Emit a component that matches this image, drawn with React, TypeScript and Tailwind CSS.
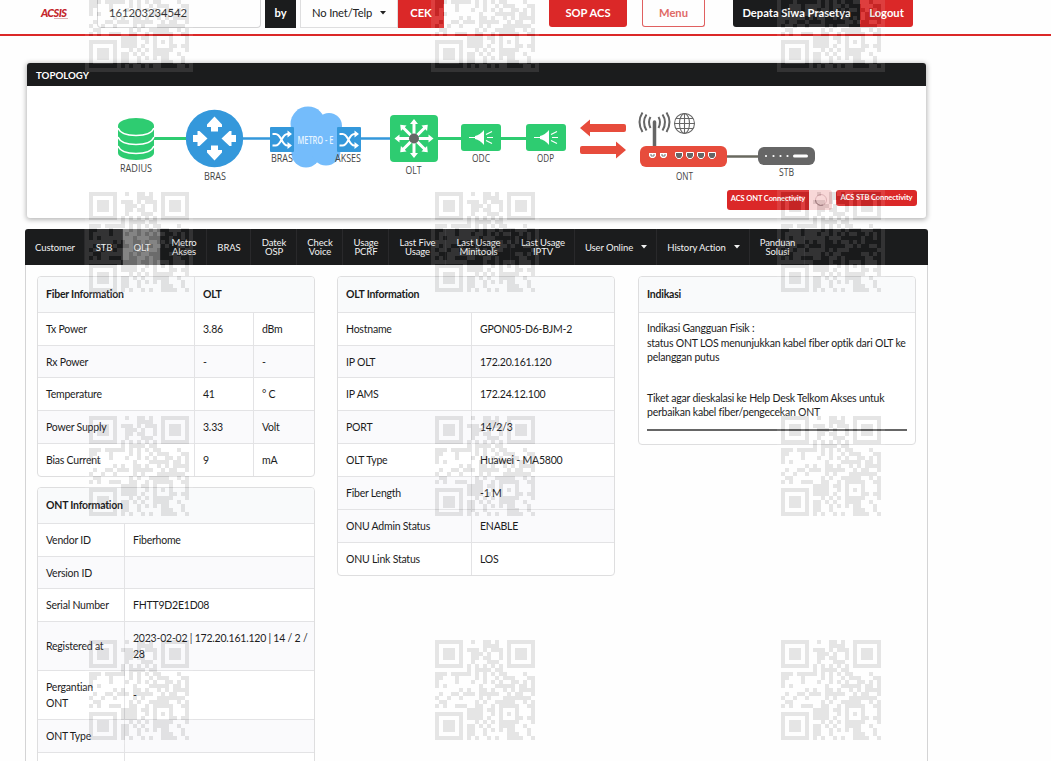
import type { ReactNode } from "react";
import { clsx } from "clsx";

const QR_ROWS = [
    "#######..#..##.#..#######",
    "#.....#.....####..#.....#",
    "#.###.#.###.#.###.#.###.#",
    "#.###.#..###.#..#.#.###.#",
    "#.###.#..##.##..#.#.###.#",
    "#.....#..#...###..#.....#",
    "#######.#.#.#.#.#.#######",
    "........#.####.##........",
    "###.#####.#.#.#.##....#..",
    "##...#....#.#..#.###...##",
    "#....#...#..#.#.#..##.#.#",
    "#.#........#...#####.##.#",
    "......#.#..##.#..#.#.####",
    ".#..##.###.#####..#.##..#",
    "#..#..#....#.#...#######.",
    ".##.......#.#..#####..#.#",
    "#.#..###..##..#.#####..##",
    "........####.##.#...#...#",
    "#######.####..#.#.#.#...#",
    "#.....#.####.#..#...##.##",
    "#.###.#...#.#.#.#####...#",
    "#.###.#.##.#.#..####..#..",
    "#.###.#.##..#.#.#.##...#.",
    "#.....#.##..#.....###..#.",
    "#######.#.#..#.#..####..#",
];

const QR_PATH = QR_ROWS.map((row, y) =>
    row.split("").map((cell, x) => (cell === "#" ? `M${x + 1} ${y + 1}h1v1h-1z` : "")).join("")
).join("");

type Row = { cells: string[]; h: string; striped?: boolean };

const fiberRows: Row[] = [
    { cells: ["Tx Power", "3.86", "dBm"], h: "h-[33px]" },
    { cells: ["Rx Power", "-", "-"], h: "h-[32px]", striped: true },
    { cells: ["Temperature", "41", "° C"], h: "h-[33px]" },
    { cells: ["Power Supply", "3.33", "Volt"], h: "h-[33px]", striped: true },
    { cells: ["Bias Current", "9", "mA"], h: "h-[33px]" },
];

const ontRows: Row[] = [
    { cells: ["Vendor ID", "Fiberhome"], h: "h-[33px]" },
    { cells: ["Version ID", ""], h: "h-[32px]", striped: true },
    { cells: ["Serial Number", "FHTT9D2E1D08"], h: "h-[33px]" },
    { cells: ["Registered at", "2023-02-02 | 172.20.161.120 | 14 / 2 / 28"], h: "h-[49px]", striped: true },
    { cells: ["Pergantian ONT", "-"], h: "h-[49px]" },
    { cells: ["ONT Type", ""], h: "h-[33px]", striped: true },
    { cells: ["", ""], h: "h-[33px]" },
];

const oltRows: Row[] = [
    { cells: ["Hostname", "GPON05-D6-BJM-2"], h: "h-[33px]" },
    { cells: ["IP OLT", "172.20.161.120"], h: "h-[32px]", striped: true },
    { cells: ["IP AMS", "172.24.12.100"], h: "h-[33px]" },
    { cells: ["PORT", "14/2/3"], h: "h-[33px]", striped: true },
    { cells: ["OLT Type", "Huawei - MA5800"], h: "h-[33px]" },
    { cells: ["Fiber Length", "-1 M"], h: "h-[33px]", striped: true },
    { cells: ["ONU Admin Status", "ENABLE"], h: "h-[33px]", striped: true },
    { cells: ["ONU Link Status", "LOS"], h: "h-[33px]" },
];

const menuItems = [
    { label: ["Customer"], w: "w-[60px]" },
    { label: ["STB"], w: "w-[38px]" },
    { label: ["OLT"], w: "w-[38px]", active: true },
    { label: ["Metro", "Akses"], w: "w-[46px]" },
    { label: ["BRAS"], w: "w-[44px]" },
    { label: ["Datek", "OSP"], w: "w-[46px]" },
    { label: ["Check", "Voice"], w: "w-[46px]" },
    { label: ["Usage", "PCRF"], w: "w-[46px]" },
    { label: ["Last Five", "Usage"], w: "w-[57px]" },
    { label: ["Last Usage", "Minitools"], w: "w-[65px]" },
    { label: ["Last Usage", "IPTV"], w: "w-[64px]" },
    { label: ["User Online"], w: "w-[82px]", caret: true },
    { label: ["History Action"], w: "w-[93px]", caret: true },
    { label: ["Panduan", "Solusi"], w: "w-[55px]" },
];

function Caret({ className }: { className?: string }) {
    return (
        <svg width="6" height="4" viewBox="0 0 6 4" className={className} fill="currentColor">
            <path d="M0 0h6L3 3.5z" />
        </svg>
    );
}

function Header() {
    return (
        <header className="flex h-9 items-start border-b-2 border-[#db2828] text-[11.2px] font-bold leading-none tracking-normal text-white">
            <div className="ml-[41px] mt-[7px] w-[56px] text-[#c4262c]">
                <div className="text-[11px] font-black italic leading-[11px] tracking-[-0.6px]">ACSIS</div>
                <div className="ml-[13px] h-px w-[14px] bg-[#dcb4b6]" />
            </div>
            <div className="flex h-7 w-[164px] items-center rounded-b-[4px] border border-t-0 border-[#d4d4d5] pb-px pl-[11px] font-normal text-[#333]">161203234542</div>
            <div className="ml-1 flex h-7 w-[31px] items-center justify-center bg-[#1b1c1d] pb-0.5">by</div>
            <div className="ml-1 flex h-7 w-[98px] items-center border border-t-0 border-[#dededf] pb-px pl-[11px] font-normal tracking-[-0.15px] text-[#222]">
                No Inet/Telp
                <Caret className="ml-[8px]" />
            </div>
            <div className="flex h-7 w-[46px] items-center justify-center bg-[#db2828] pb-0.5">CEK</div>
            <div className="ml-[105px] flex h-[27px] w-[78px] items-center justify-center rounded-b-[3px] bg-[#db2828] pb-px">SOP ACS</div>
            <div className="ml-[15px] flex h-[27px] w-[63px] items-center justify-center rounded-b-[3px] border border-t-0 border-[#e06060] text-[#e06a66]">Menu</div>
            <div className="ml-[28px] flex h-[27px] w-[127px] items-center justify-center rounded-bl-[3px] bg-[#1b1c1d] pb-px">Depata Siwa Prasetya</div>
            <div className="flex h-[27px] w-[53px] items-center justify-center rounded-br-[3px] bg-[#db2828] pb-px">Logout</div>
        </header>
    );
}

function Shuffle({ x, y }: { x: number; y: number }) {
    return (
        <g transform={`translate(${x} ${y})`}>
            <rect width="24" height="25" rx="1" fill="#3498db" />
            <path d="M2.500 7H5.500Q8.500 7 11.500 12.700T17.500 18.500H19M2.500 18.500H5.500Q8.500 18.500 11.500 12.700T17.500 7H19" fill="none" stroke="#fff" strokeWidth="2" />
            <path d="M17.500 3.500L22 7l-4.500 3.500zM17.500 15L22 18.500l-4.500 3.500z" fill="#fff" />
        </g>
    );
}

function Splitter({ x }: { x: number }) {
    return (
        <g transform={`translate(${x} 124)`}>
            <rect width="40" height="27" rx="3" fill="#2ecc71" />
            <path d="M8 13.500h7" stroke="#fff" strokeWidth="1.200" />
            <path d="M14 12q5-1 9-6v15q-4-5-9-6z" fill="#fff" />
            <path d="M25 10.500l6-3M26 13.500h6M25 16.500l6 3" stroke="#fff" strokeWidth="1.200" />
        </g>
    );
}

function Label({ x, y, w, children }: { x: number; y: number; w: number; children: string }) {
    return (
        <text x={x - w / 2} y={y} textLength={w} lengthAdjust="spacingAndGlyphs" fontSize="10.500" fill="#444">{children}</text>
    );
}

function Diagram() {
    return (
        <svg width="899" height="103" viewBox="27 86 899 103" className="block tracking-normal" fontFamily="'Open Sans', sans-serif">
            <path d="M152 138.500h36M436 138.500h28M498 138.500h30" stroke="#2ecc71" strokeWidth="3" />
            <path d="M240 138.500h32M360 138.500h32" stroke="#3498db" strokeWidth="2.500" />

            <path d="M118 126v27c0 4 8 7 18 7s18-3 18-7v-27z" fill="#2ecc71" />
            <ellipse cx="136" cy="126" rx="18" ry="8" fill="#2ecc71" />
            <path d="M118 128c2 5 9 7.500 18 7.500s16-2.500 18-7.500M118 137c2 5 9 7.500 18 7.500s16-2.500 18-7.500M118 146c2 5 9 7.500 18 7.500s16-2.500 18-7.500" fill="none" stroke="#fff" strokeWidth="1.500" />

            <circle cx="214.500" cy="138.500" r="28.700" fill="#3498db" />
            <g fill="#fff">
                {[0, 180].map((a) => (
                    <path key={a} transform={`rotate(${a} 214.500 138.500)`} d="M214.500 116.500l7.500 8v2.500h-4v4.500h-7v-4.500h-4v-2.500z" />
                ))}
                {[90, 270].map((a) => (
                    <path key={a} transform={`rotate(${a} 214.500 138.500)`} d="M214.500 131.500l7.500-8v-2h-4v-4.500h-7v4.500h-4v2z" />
                ))}
            </g>

            <g fill="#74bcfb">
                <circle cx="308" cy="124" r="17.500" />
                <circle cx="329" cy="126" r="13" />
                <circle cx="306" cy="153" r="14.500" />
                <circle cx="326" cy="151" r="14.500" />
                <circle cx="338" cy="139" r="12" />
                <rect x="292" y="122" width="48" height="34" rx="8" />
            </g>
            <Shuffle x={270} y={127} />
            <Shuffle x={337} y={127} />
            <text x="297.500" y="143.500" textLength="36" lengthAdjust="spacingAndGlyphs" fontSize="10.500" fontWeight="600" fill="#e8f5ff">METRO - E</text>

            <rect x="390" y="115" width="48" height="47" rx="4" fill="#2ecc71" />
            {[0, 45, 90, 135, 180, 225, 270, 315].map((a) => (
                <path key={a} transform={`rotate(${a} 414 138.500)`} d="M412.500 138v-14h-2.500l4-5 4 5h-2.500v14z" fill="#fff" />
            ))}
            <circle cx="414" cy="138.500" r="5" fill="#666" />
            <Splitter x={461} />
            <Splitter x={526} />

            <path d="M580 128l10-8.500v4.500h34q2 0 2 2v4q0 2-2 2h-34v4.500zM626 150l-10-8.500v4.500h-34q-2 0-2 2v4q0 2 2 2h34v4.500z" fill="#e74c3c" />

            <path d="M654.500 122v26" stroke="#666" strokeWidth="3.500" strokeLinecap="round" />
            <path d="M650.500 117q-3 5 0 11M646.500 114.500q-5 7.500 0 16M642.500 112.500q-6 9.500 0 19.500M658.500 117q3 5 0 11M662.500 114.500q5 7.500 0 16M666.500 112.500q6 9.500 0 19.500" fill="none" stroke="#666" strokeWidth="2" />
            <g fill="none" stroke="#666" strokeWidth="1.100">
                <circle cx="684.500" cy="123.500" r="10" />
                <ellipse cx="684.500" cy="123.500" rx="5" ry="10" />
                <path d="M684.500 113.500v20M674.500 123.500h20M676 118.500h17M676 128.500h17" />
            </g>
            <path d="M726 156.500h34" stroke="#69695f" strokeWidth="2.500" />
            <rect x="640" y="146" width="87" height="21" rx="6" fill="#e74c3c" />
            {[652.5, 663.5].map((x) => (
                <g key={x} transform={`translate(${x} 155.500)`}>
                    <path d="M-3.500-2.500h7v3l-2 2h-3l-2-2z" fill="#fff" />
                    <path d="M-1.500-1.500v2h3v-2" fill="none" stroke="#777" />
                </g>
            ))}
            {[679, 690, 701, 712].map((x) => (
                <path key={x} d={`M${x - 3.5} 152.500h7v3.500l-2 2.500h-3l-2-2.500z`} fill="#666" stroke="#fff" />
            ))}
            <rect x="758" y="147" width="57" height="18" rx="6" fill="#666" />
            {[766, 773.5, 780.5, 787.5].map((x) => (
                <circle key={x} cx={x} cy="156" r="1.100" fill="#fff" />
            ))}
            <rect x="793" y="154.500" width="15" height="3" rx="1.500" fill="#fff" />

            <Label x={136} y={172} w={32}>RADIUS</Label>
            <Label x={215} y={180} w={22}>BRAS</Label>
            <Label x={282} y={162} w={22}>BRAS</Label>
            <Label x={348} y={162} w={26}>AKSES</Label>
            <Label x={413.5} y={174} w={16}>OLT</Label>
            <Label x={481} y={162} w={18}>ODC</Label>
            <Label x={545.5} y={162} w={17}>ODP</Label>
            <Label x={684.5} y={180} w={17}>ONT</Label>
            <Label x={786.5} y={176} w={15}>STB</Label>
        </svg>
    );
}

function Topology() {
    return (
        <section className="ml-[27px] mt-[27px] h-[155px] w-[899px] overflow-hidden rounded-[3px] bg-white shadow-[0_1px_5px_1px_rgba(0,0,0,0.28)]">
            <h2 className="flex h-[23px] items-center bg-[#1b1c1d] pl-[9px] pt-px text-[9.7px] font-bold tracking-normal text-white">TOPOLOGY</h2>
            <Diagram />
            <div className="flex pl-[700px] pt-px text-[7.5px] font-bold tracking-[-0.1px] text-white">
                <div className="flex h-5 w-[82px] items-center justify-center whitespace-nowrap rounded-l-[3px] bg-[#db2828] pb-[3px]">ACS ONT Connectivity</div>
                <div className="flex h-5 w-[23px] items-center justify-center rounded-r-[3px] bg-[#f8d4d4]">
                    <svg width="14" height="14" viewBox="0 0 14 14" fill="none">
                        <circle cx="7" cy="7" r="5.500" stroke="#d8a9ad" />
                        <path d="M1.500 7A5.500 5.500 0 0 0 9 12" stroke="#a98487" />
                    </svg>
                </div>
                <div className="ml-1 flex h-4 w-[81px] items-center justify-center whitespace-nowrap rounded-[3px] bg-[#db2828]">ACS STB Connectivity</div>
            </div>
        </section>
    );
}

function Menu() {
    return (
        <nav className="flex h-9 rounded-t-[3px] bg-[#1b1c1d] text-[9.500px] leading-[9px] tracking-[-0.1px] text-[#f2f2f2]">
            {menuItems.map((item, i) => (
                <div
                    key={i}
                    className={clsx("flex shrink-0 items-center justify-center whitespace-nowrap border-r border-[#29292b] pl-px text-center", item.w, item.active && "bg-[#767676] text-white")}
                >
                    <span>
                        {item.label.map((line) => (
                            <span key={line} className="block">{line}</span>
                        ))}
                    </span>
                    {item.caret && <Caret className="ml-[8px]" />}
                </div>
            ))}
        </nav>
    );
}

function Panel({ className, children }: { className?: string; children: ReactNode }) {
    return <div className={clsx("w-[278px] shrink-0 overflow-hidden rounded-[4px] border border-[#dededf] bg-white", className)}>{children}</div>;
}

function InfoTable({ head, rows, cols }: { head: string[]; rows: Row[]; cols: string[] }) {
    return (
        <Panel>
            <div className="flex h-[35px] bg-[#f9fafb] font-bold">
                {head.map((text, i) => (
                    <div key={text} className={clsx("flex items-center pl-2 pt-px", i === 0 && head.length > 1 ? cols[0] : "flex-1", i > 0 && "border-l border-[#e3e3e5]")}>{text}</div>
                ))}
            </div>
            {rows.map((row, i) => (
                <div key={i} className={clsx("flex border-t border-[#e3e3e5]", row.h, row.striped && "bg-[#fafafc]")}>
                    {row.cells.map((cell, j) => (
                        <div key={j} className={clsx("flex shrink-0 items-center pl-2 leading-[16px]", cols[j], j > 0 ? "border-l border-[#e3e3e5] pr-1" : "pr-2")}>{cell}</div>
                    ))}
                </div>
            ))}
        </Panel>
    );
}

function Watermark() {
    return (
        <div className="pointer-events-none absolute left-[85px] top-[-36px] grid grid-cols-[repeat(3,346px)] grid-rows-[repeat(4,224px)] opacity-10">
            {Array.from({ length: 12 }, (_, i) => (
                <svg key={i} width="108" height="108" viewBox="0 0 27 27" shapeRendering="crispEdges">
                    <rect width="27" height="27" fill="#fff" />
                    <path d={QR_PATH} fill="#111" />
                </svg>
            ))}
        </div>
    );
}

export default function App() {
    return (
        <div className="relative h-[761px] w-[1051px] overflow-hidden bg-[#fefefe] font-['Lato',sans-serif] text-[10.500px] tracking-[-0.22px] text-[#1c1c1c]">
            <Header />
            <Topology />
            <main className="ml-[25px] mt-[11px] w-[903px]">
                <Menu />
                <div className="flex h-[600px] items-start border-x border-[#d4d4d5] pl-[11px] pt-[11px]">
                    <div className="flex flex-col gap-[10px]">
                        <InfoTable head={["Fiber Information", "OLT"]} rows={fiberRows} cols={["w-[156px]", "w-[59px]", "w-[61px]"]} />
                        <InfoTable head={["ONT Information"]} rows={ontRows} cols={["w-[86px]", "w-[190px]"]} />
                    </div>
                    <div className="ml-[22px]">
                        <InfoTable head={["OLT Information"]} rows={oltRows} cols={["w-[133px]", "w-[143px]"]} />
                    </div>
                    <Panel className="ml-[23px] h-[169px]">
                        <h3 className="flex h-9 items-center border-b border-[#e3e3e5] bg-[#f9fafb] pl-2 font-bold">Indikasi</h3>
                        <div className="px-2 pt-2 leading-[14.500px]">
                            <p>Indikasi Gangguan Fisik :</p>
                            <p className="-mr-1">status ONT LOS menunjukkan kabel fiber optik dari OLT ke pelanggan putus</p>
                            <p className="mt-[26px]">Tiket agar dieskalasi ke Help Desk Telkom Akses untuk perbaikan kabel fiber/pengecekan ONT</p>
                            <hr className="mt-[9px] border-t-2 border-[#666]" />
                        </div>
                    </Panel>
                </div>
            </main>
            <Watermark />
        </div>
    );
}
